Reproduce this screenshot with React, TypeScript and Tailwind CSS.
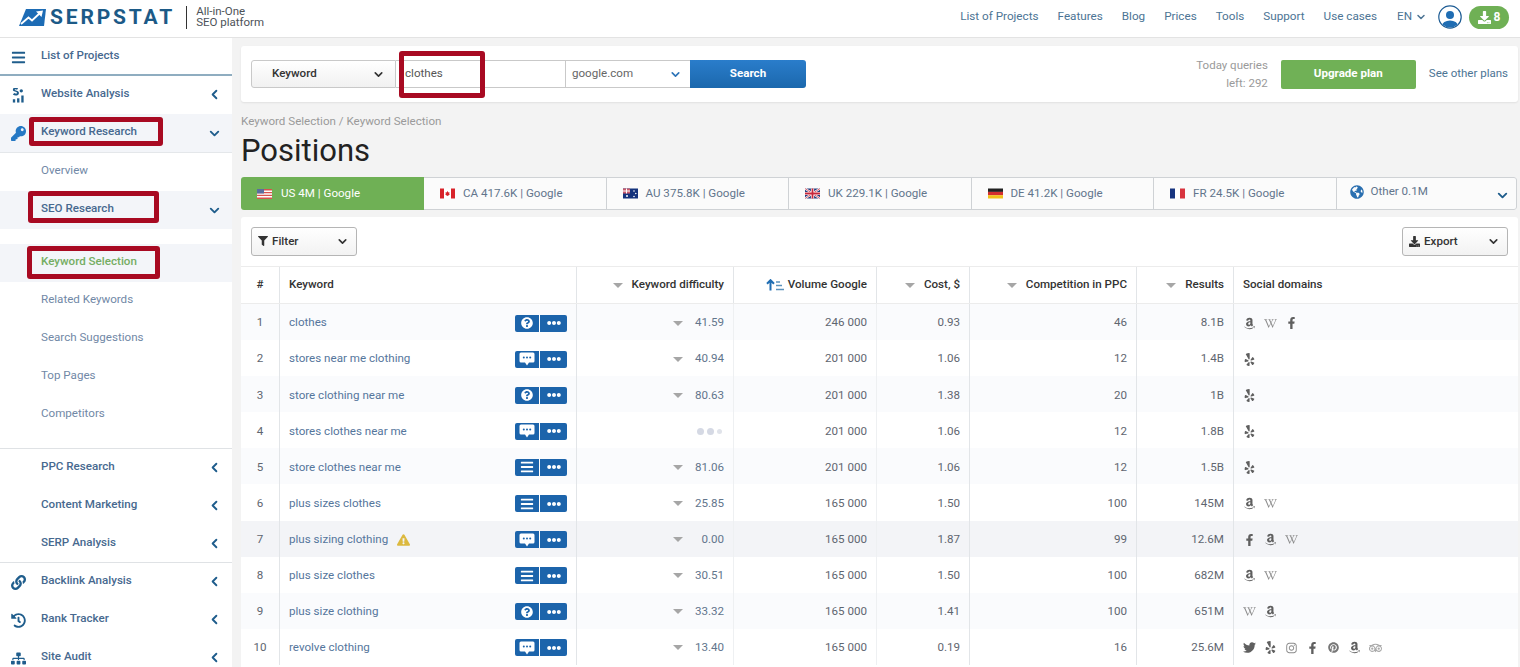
import React from "react";
import { ChevronDown, ChevronLeft } from "lucide-react";
import {
  FaAmazon,
  FaBars,
  FaDownload,
  FaEllipsisH,
  FaExclamationTriangle,
  FaFacebookF,
  FaFilter,
  FaGlobeAmericas,
  FaHistory,
  FaInstagram,
  FaKey,
  FaLink,
  FaPinterest,
  FaQuestionCircle,
  FaSitemap,
  FaTripadvisor,
  FaTwitter,
  FaWikipediaW,
  FaYelp,
} from "react-icons/fa";

const navLinks = ["List of Projects", "Features", "Blog", "Prices", "Tools", "Support", "Use cases"];

function Logo() {
  return (
    <div className="flex items-center">
      <svg viewBox="0 0 27 17" className="w-[27px] h-[17px] ml-[19px]">
        <path d="M7 0H27L25 17H0Z" fill="#1d6cb5" />
        <path d="M2 15L9.500 8.500L13 11.500L21 4" fill="none" stroke="#fff" strokeWidth="1.800" />
        <path d="M17 2.500L24 1.500L22.500 8Z" fill="#fff" />
      </svg>
      <span className="ml-[4px] text-[21px] leading-none font-bold tracking-[0.135em] text-[#1c5a87]">SERPSTAT</span>
      <span className="ml-[11px] w-px h-[23px] bg-[#333]" />
      <span className="ml-[9px] text-[11.5px] leading-[11px] text-[#4d5258]">
        All-in-One
        <br />
        SEO platform
      </span>
    </div>
  );
}

function Header() {
  return (
    <header className="h-[38px] shrink-0 bg-white border-b border-[#e3e3e3] flex items-center justify-between pb-[3px]">
      <Logo />
      <div className="flex items-center pr-[11px]">
        <nav className="flex gap-[19px] text-[11.7px] text-[#4c7494]">
          {navLinks.map((l) => (
            <span key={l}>{l}</span>
          ))}
        </nav>
        <span className="ml-[20px] text-[11.7px] text-[#4c7494]">EN</span>
        <ChevronDown className="ml-[3px] w-[12px] h-[12px] text-[#4c7494]" strokeWidth={3} />
        <svg viewBox="0 0 24 24" className="ml-[11px] w-[24px] h-[24px]">
          <defs>
            <clipPath id="avatar">
              <circle cx="12" cy="12" r="10.5" />
            </clipPath>
          </defs>
          <circle cx="12" cy="12" r="11.2" fill="#fff" stroke="#1d5c94" strokeWidth="1.2" />
          <g clipPath="url(#avatar)" fill="#1f6db3">
            <circle cx="12" cy="10" r="4" />
            <ellipse cx="12" cy="21" rx="8" ry="5.5" />
          </g>
        </svg>
        <div className="ml-[7px] w-[40px] h-[23px] rounded-full bg-[#6fb055] flex items-center justify-center gap-[3px] text-white text-[12px] font-bold">
          <FaDownload className="w-[13px] h-[13px]" />
          <span>8</span>
        </div>
      </div>
    </header>
  );
}

function RedBox({ className }: { className: string }) {
  return <span className={`absolute border-[5px] border-[#a80a22] rounded-[3px] pointer-events-none ${className}`} />;
}

function WebsiteIcon() {
  return (
    <svg viewBox="0 0 14 16" className="w-[14px] h-[15px]" fill="#1f5d8c">
      <path d="M7 0.5a3 3 0 0 0-5.5 1.5c0 2 4.500 1.500 4.500 3.200 0 .8-1.500 1-3 0L1.500 7c2.500 2 6.500 1 6.500-1.800 0-2.700-4.500-2.300-4.500-3.300 0-.8 1.500-.8 2.500 0Z" />
      <circle cx="10.500" cy="3" r="1.800" />
      <rect x="1.500" y="12" width="2.500" height="3.500" />
      <rect x="6" y="11" width="2.500" height="4.500" />
      <rect x="10.500" y="8" width="2.500" height="7.500" />
    </svg>
  );
}

function SideRow({
  label,
  icon,
  tone = "top",
  chevron,
  active,
  box,
}: {
  label: string;
  icon?: React.ReactNode;
  tone?: "top" | "sub" | "child" | "current";
  chevron?: "left" | "down";
  active?: boolean;
  box?: string;
}) {
  const text =
    tone === "current"
      ? "text-[#75ad63] font-medium"
      : tone === "child"
        ? "text-[#7188a6]"
        : "text-[#47698f] font-medium";
  return (
    <div className={`relative h-[38px] flex items-center text-[11.6px] ${active ? "bg-[#f3f5f9]" : ""}`}>
      <span className="w-[41px] pl-[11px] shrink-0 flex items-center">{icon}</span>
      <span className={`pb-[3px] ${text}`}>{label}</span>
      {chevron === "left" && (
        <ChevronLeft className="absolute left-[207px] top-[11px] w-[15px] h-[15px] text-[#1f5d8c]" strokeWidth={3} />
      )}
      {chevron === "down" && (
        <ChevronDown className="absolute left-[207px] top-[12px] w-[15px] h-[15px] text-[#1f5d8c]" strokeWidth={3} />
      )}
      {box && <RedBox className={box} />}
    </div>
  );
}

function Sidebar() {
  const iconClass = "w-[15px] h-[15px] text-[#1f5d8c]";
  return (
    <aside className="w-[232px] shrink-0 bg-white overflow-hidden">
      <div className="border-b-2 border-[#8fadc0] h-[38px]">
        <SideRow label="List of Projects" icon={<FaBars className={iconClass} />} />
      </div>
      <SideRow label="Website Analysis" icon={<WebsiteIcon />} chevron="left" />
      <div className="border-b border-[#e4e7ea]">
        <SideRow
          label="Keyword Research"
          icon={<FaKey className="w-[15px] h-[15px] text-[#2578c4]" />}
          chevron="down"
          active
          box="left-[29px] top-[3px] w-[134px] h-[29px]"
        />
      </div>
      <SideRow label="Overview" tone="child" />
      <SideRow
        label="SEO Research"
        tone="sub"
        chevron="down"
        active
        box="left-[28px] top-0 w-[131px] h-[32px]"
      />
      <div className="h-[15px]" />
      <SideRow
        label="Keyword Selection"
        tone="current"
        active
        box="left-[27px] top-[2px] w-[133px] h-[33px]"
      />
      <SideRow label="Related Keywords" tone="child" />
      <SideRow label="Search Suggestions" tone="child" />
      <SideRow label="Top Pages" tone="child" />
      <SideRow label="Competitors" tone="child" />
      <div className="h-[15px] border-b border-[#dfe2e5]" />
      <SideRow label="PPC Research" tone="sub" chevron="left" />
      <SideRow label="Content Marketing" tone="sub" chevron="left" />
      <SideRow label="SERP Analysis" tone="sub" chevron="left" />
      <div className="border-t border-[#dfe2e5] -mt-px">
        <SideRow label="Backlink Analysis" icon={<FaLink className={iconClass} />} chevron="left" />
        <SideRow label="Rank Tracker" icon={<FaHistory className={iconClass} />} chevron="left" />
        <SideRow label="Site Audit" icon={<FaSitemap className={iconClass} />} chevron="left" />
      </div>
    </aside>
  );
}

function SearchCard() {
  return (
    <div className="h-[56px] bg-white rounded-[3px] flex items-center pl-[10px] pr-[10px] shadow-[0_1px_2px_rgba(0,0,0,0.08)]">
      <div className="flex h-[28px] text-[11.6px]">
        <div className="w-[145px] pl-[20px] pr-[10px] flex items-center justify-between border border-[#c9c9c9] rounded-l-[3px] bg-gradient-to-b from-white to-[#f1f1f1] font-medium text-[#333]">
          Keyword
          <ChevronDown className="w-[13px] h-[13px]" strokeWidth={3} />
        </div>
        <div className="relative w-[170px] px-[9px] flex items-center border-y border-r border-[#c9c9c9] text-[#555]">
          clothes
          <RedBox className="left-[3px] top-[-10px] w-[86px] h-[47px]" />
        </div>
        <div className="w-[124px] pl-[6px] pr-[8px] flex items-center justify-between border-y border-[#c9c9c9] text-[#666]">
          google.com
          <ChevronDown className="w-[13px] h-[13px] text-[#2d74b8]" strokeWidth={3} />
        </div>
        <div className="w-[116px] flex items-center justify-center rounded-r-[3px] bg-gradient-to-b from-[#2a7dcb] to-[#1b68ad] text-white font-bold">
          Search
        </div>
      </div>
      <div className="ml-auto text-right text-[11.5px] leading-[18px] text-[#9a9a9a]">
        Today queries
        <br />
        left: 292
      </div>
      <div className="ml-[13px] w-[135px] h-[29px] rounded-[2px] bg-[#70b156] flex items-center justify-center text-white text-[11.6px] font-bold">
        Upgrade plan
      </div>
      <span className="ml-[13px] text-[11.5px] text-[#4c7494]">See other plans</span>
    </div>
  );
}

function FlagUS() {
  return (
    <svg viewBox="0 0 15 10" className="w-[15px] h-[10px]">
      <rect width="15" height="10" fill="#fff" />
      <path d="M0 0h15v1.400H0zM0 2.900h15v1.400H0zM0 5.700h15v1.400H0zM0 8.600h15V10H0z" fill="#d8524e" />
      <rect width="7" height="4.500" fill="#5a6f9f" />
    </svg>
  );
}
function FlagCA() {
  return (
    <svg viewBox="0 0 15 10" className="w-[15px] h-[11px]">
      <rect width="15" height="10" fill="#fff" />
      <rect width="4" height="10" fill="#d8232a" />
      <rect x="11" width="4" height="10" fill="#d8232a" />
      <path d="M7.500 2.500l1 1.500 1-.3-.3 2 .8.300-2.500 1.500-2.500-1.500.8-.3-.3-2 1 .3z" fill="#d8232a" />
    </svg>
  );
}
function FlagAU() {
  return (
    <svg viewBox="0 0 15 10" className="w-[15px] h-[11px]">
      <rect width="15" height="10" fill="#15337d" />
      <rect width="7" height="5" fill="#c9586a" />
      <path d="M0 2h7v1H0zM3 0h1v5H3z" fill="#fff" />
      <circle cx="11" cy="2.500" r=".8" fill="#fff" />
      <circle cx="12.800" cy="5" r=".8" fill="#fff" />
      <circle cx="11" cy="8" r=".8" fill="#fff" />
      <circle cx="4" cy="7.500" r="1" fill="#fff" />
    </svg>
  );
}
function FlagUK() {
  return (
    <svg viewBox="0 0 15 10" className="w-[15px] h-[11px]">
      <rect width="15" height="10" fill="#27407f" />
      <path d="M0 0l15 10M15 0L0 10" stroke="#fff" strokeWidth="2" />
      <path d="M0 0l15 10M15 0L0 10" stroke="#c8283c" strokeWidth=".7" />
      <path d="M7.500 0v10M0 5h15" stroke="#fff" strokeWidth="3.200" />
      <path d="M7.500 0v10M0 5h15" stroke="#c8283c" strokeWidth="1.800" />
    </svg>
  );
}
function FlagDE() {
  return (
    <svg viewBox="0 0 15 10" className="w-[15px] h-[11px]">
      <rect width="15" height="3.400" fill="#222" />
      <rect y="3.400" width="15" height="3.300" fill="#d32f2f" />
      <rect y="6.700" width="15" height="3.300" fill="#f2c21a" />
    </svg>
  );
}
function FlagFR() {
  return (
    <svg viewBox="0 0 15 10" className="w-[15px] h-[11px]">
      <rect width="5" height="10" fill="#17347f" />
      <rect x="5" width="5" height="10" fill="#fff" />
      <rect x="10" width="5" height="10" fill="#d8343f" />
    </svg>
  );
}

function RegionTabs() {
  const tabs = [
    { label: "CA 417.6K | Google", flag: <FlagCA /> },
    { label: "AU 375.8K | Google", flag: <FlagAU /> },
    { label: "UK 229.1K | Google", flag: <FlagUK /> },
    { label: "DE 41.2K | Google", flag: <FlagDE /> },
    { label: "FR 24.5K | Google", flag: <FlagFR /> },
  ];
  return (
    <div className="flex h-[33px] text-[11.6px] rounded-[3px] overflow-hidden bg-[#fbfbfb] mr-px">
      <div className="w-[183px] shrink-0 bg-[#6fb055] text-white flex items-center gap-[9px] pl-[16px]">
        <FlagUS />
        US 4M | Google
      </div>
      {tabs.map((t) => (
        <div key={t.label} className="w-[182.500px] shrink-0 border-y border-r border-[#cfd2d5] flex items-center gap-[8px] pl-[16px] text-[#62758c]">
          {t.flag}
          {t.label}
        </div>
      ))}
      <div className="flex-1 relative border-y border-r border-[#cfd2d5] rounded-r-[3px] flex items-center gap-[7px] pl-[13px] pb-[3px] text-[#62758c]">
        <FaGlobeAmericas className="w-[14px] h-[14px] text-[#2a6fb0]" />
        Other 0.1M
        <ChevronDown className="absolute right-[6px] top-[10px] w-[15px] h-[15px] text-[#1f5d8c]" strokeWidth={3} />
      </div>
    </div>
  );
}

function SortArrow() {
  return <span className="w-0 h-0 border-x-[5px] border-x-transparent border-t-[5px] border-t-[#a6a6a6]" />;
}

function VolumeSort() {
  return (
    <svg viewBox="0 0 18 12" className="w-[18px] h-[12px]">
      <path d="M4.500 11.500V2M1 4.800L4.500 1.200 8 4.800" fill="none" stroke="#1f6db3" strokeWidth="2" />
      <path d="M10 3h4M10 6.500h6M10 10.500h8" stroke="#5b92bd" strokeWidth="1.300" fill="none" />
    </svg>
  );
}

function BubbleIcon() {
  return (
    <svg viewBox="0 0 16 14" className="w-[16px] h-[14px]">
      <path d="M2 0.500H14A1.500 1.500 0 0 1 15.500 2V9A1.500 1.500 0 0 1 14 10.500H10L8 13.500L6 10.500H2A1.500 1.500 0 0 1 .5 9V2A1.500 1.500 0 0 1 2 .5Z" fill="#fff" />
      <circle cx="4.800" cy="5.500" r="1" fill="#1c64ab" />
      <circle cx="8" cy="5.500" r="1" fill="#1c64ab" />
      <circle cx="11.200" cy="5.500" r="1" fill="#1c64ab" />
    </svg>
  );
}

type Soc = "a" | "w" | "f" | "y" | "t" | "i" | "p" | "ta";

type Row = {
  kw: string;
  badge: "q" | "c" | "l";
  diff: string | null;
  vol: string;
  cost: string;
  comp: string;
  res: string;
  soc: Soc[];
  warn?: boolean;
};

const rows: Row[] = [
  { kw: "clothes", badge: "q", diff: "41.59", vol: "246 000", cost: "0.93", comp: "46", res: "8.1B", soc: ["a", "w", "f"] },
  { kw: "stores near me clothing", badge: "c", diff: "40.94", vol: "201 000", cost: "1.06", comp: "12", res: "1.4B", soc: ["y"] },
  { kw: "store clothing near me", badge: "q", diff: "80.63", vol: "201 000", cost: "1.38", comp: "20", res: "1B", soc: ["y"] },
  { kw: "stores clothes near me", badge: "c", diff: null, vol: "201 000", cost: "1.06", comp: "12", res: "1.8B", soc: ["y"] },
  { kw: "store clothes near me", badge: "l", diff: "81.06", vol: "201 000", cost: "1.06", comp: "12", res: "1.5B", soc: ["y"] },
  { kw: "plus sizes clothes", badge: "l", diff: "25.85", vol: "165 000", cost: "1.50", comp: "100", res: "145M", soc: ["a", "w"] },
  { kw: "plus sizing clothing", badge: "c", diff: "0.00", vol: "165 000", cost: "1.87", comp: "99", res: "12.6M", soc: ["f", "a", "w"], warn: true },
  { kw: "plus size clothes", badge: "l", diff: "30.51", vol: "165 000", cost: "1.50", comp: "100", res: "682M", soc: ["a", "w"] },
  { kw: "plus size clothing", badge: "q", diff: "33.32", vol: "165 000", cost: "1.41", comp: "100", res: "651M", soc: ["w", "a"] },
  { kw: "revolve clothing", badge: "c", diff: "13.40", vol: "165 000", cost: "0.19", comp: "16", res: "25.6M", soc: ["t", "y", "i", "f", "p", "a", "ta"] },
];

function SocialIcon({ s }: { s: Soc }) {
  const c = "w-[13px] h-[13px] text-[#5f5f5f]";
  if (s === "a") return <FaAmazon className={c} />;
  if (s === "w") return <FaWikipediaW className="w-[13px] h-[13px] text-[#8a8a8a]" />;
  if (s === "f") return <FaFacebookF className="w-[13px] h-[12px] text-[#5f5f5f]" />;
  if (s === "y") return <FaYelp className={c} />;
  if (s === "t") return <FaTwitter className={c} />;
  if (s === "i") return <FaInstagram className="w-[13px] h-[12px] text-[#8a8a8a]" />;
  if (s === "p") return <FaPinterest className="w-[13px] h-[11px] text-[#777]" />;
  return <FaTripadvisor className="w-[13px] h-[12px] text-[#aaa]" />;
}

function KeywordBadge({ kind }: { kind: Row["badge"] }) {
  return (
    <div className="flex h-[17px] rounded-[2px] overflow-hidden text-white">
      <span className="w-[25px] bg-[#1c64ab] flex items-center justify-center border-r border-white">
        {kind === "q" && <FaQuestionCircle className="w-[12px] h-[12px]" />}
        {kind === "c" && <BubbleIcon />}
        {kind === "l" && <FaBars className="w-[14px] h-[14px]" />}
      </span>
      <span className="w-[27px] bg-[#1c64ab] flex items-center justify-center">
        <FaEllipsisH className="w-[14px] h-[14px]" />
      </span>
    </div>
  );
}

const grid = "grid grid-cols-[39px_297px_157px_143px_93px_167px_97px_1fr]";

function KeywordTable() {
  return (
    <div className="text-[11.6px] pb-[20px]">
      <div className={`${grid} h-[38px] border-y border-[#ececec] text-[#333]`}>
        <div className="border-r border-[#e2e5e8] flex items-center justify-center font-medium">#</div>
        <div className="border-r border-[#e2e5e8] flex items-center pl-[9px] font-medium">Keyword</div>
        <div className="border-r border-[#e2e5e8] flex items-center justify-end gap-[9px] pr-[9px] font-medium">
          <SortArrow />
          Keyword difficulty
        </div>
        <div className="border-r border-[#e2e5e8] flex items-center justify-end gap-[4px] pr-[9px] font-medium">
          <VolumeSort />
          Volume Google
        </div>
        <div className="border-r border-[#e2e5e8] flex items-center justify-end gap-[9px] pr-[9px] font-medium">
          <SortArrow />
          Cost, $
        </div>
        <div className="border-r border-[#e2e5e8] flex items-center justify-end gap-[9px] pr-[9px] font-medium">
          <SortArrow />
          Competition in PPC
        </div>
        <div className="border-r border-[#e2e5e8] flex items-center justify-end gap-[9px] pr-[9px] font-medium">
          <SortArrow />
          Results
        </div>
        <div className="flex items-center pl-[9px] font-medium">Social domains</div>
      </div>
      {rows.map((r, i) => (
        <div
          key={r.kw}
          className={`${grid} h-[36.100px] ${r.warn ? "bg-[#f3f4f7]" : i % 2 === 0 ? "bg-[#fafbfd]" : "bg-white"} text-[#5f6670]`}
        >
          <div className="border-r border-[#e2e5e8] flex items-center justify-center pt-[2px]">{i + 1}</div>
          <div className="border-r border-[#e2e5e8] flex items-center justify-between pl-[9px] pr-[9px] pt-[2px]">
            <span className="flex items-center gap-[9px] text-[#55769c]">
              {r.kw}
              {r.warn && <FaExclamationTriangle className="w-[13px] h-[12px] text-[#dcb93f]" />}
            </span>
            <KeywordBadge kind={r.badge} />
          </div>
          <div className="border-r border-[#eef0f2] flex items-center justify-end pr-[9px] pt-[2px] text-[#62758c]">
            {r.diff === null ? (
              <span className="flex items-center gap-[3px] mr-[2px]">
                <span className="w-[7px] h-[7px] rounded-full bg-[#d5d9e4]" />
                <span className="w-[7px] h-[7px] rounded-full bg-[#d5d9e4]" />
                <span className="w-[5px] h-[5px] rounded-full bg-[#e0e3ea]" />
              </span>
            ) : (
              <span className="flex items-center gap-[12px]">
                <SortArrow />
                <span className="w-[29px] text-right">{r.diff}</span>
              </span>
            )}
          </div>
          <div className="border-r border-[#eef0f2] flex items-center justify-end pr-[9px] pt-[2px]">{r.vol}</div>
          <div className="border-r border-[#e2e5e8] flex items-center justify-end pr-[9px] pt-[2px]">{r.cost}</div>
          <div className="border-r border-[#e2e5e8] flex items-center justify-end pr-[9px] pt-[2px]">{r.comp}</div>
          <div className="border-r border-[#e2e5e8] flex items-center justify-end pr-[9px] pt-[2px]">{r.res}</div>
          <div className="flex items-center gap-[8px] pl-[9px] pt-[2px]">
            {r.soc.map((s, j) => (
              <SocialIcon key={j} s={s} />
            ))}
          </div>
        </div>
      ))}
    </div>
  );
}

export default function App() {
  return (
    <div className="h-[667px] w-[1520px] overflow-hidden flex flex-col bg-[#f3f3f3] font-['Roboto',sans-serif]">
      <Header />
      <div className="flex flex-1 min-h-0">
        <Sidebar />
        <main className="flex-1 pl-[9px] pr-[2px] pt-[8px] overflow-hidden">
          <SearchCard />
          <div className="mt-[12px] text-[11.6px] leading-[14px] text-[#9a9a9a]">Keyword Selection / Keyword Selection</div>
          <h1 className="mt-[5px] text-[31px] leading-[36px] text-[#222]">Positions</h1>
          <div className="mt-[8px]">
            <RegionTabs />
          </div>
          <section className="mt-[7px] bg-white rounded-[3px]">
            <div className="h-[49px] flex items-center justify-between px-[10px]">
              <div className="w-[106px] h-[29px] rounded-[3px] border border-[#b5b5b5] bg-gradient-to-b from-white to-[#f2f2f2] flex items-center justify-between pl-[6px] pr-[7px] text-[11.6px] text-[#333]">
                <span className="flex items-center gap-[4px] font-medium">
                  <FaFilter className="w-[10px] h-[10px]" />
                  Filter
                </span>
                <ChevronDown className="w-[13px] h-[13px]" strokeWidth={3} />
              </div>
              <div className="w-[106px] h-[29px] rounded-[3px] border border-[#b5b5b5] bg-gradient-to-b from-white to-[#f2f2f2] flex items-center justify-between pl-[6px] pr-[7px] text-[11.6px] text-[#333]">
                <span className="flex items-center gap-[4px] font-medium">
                  <FaDownload className="w-[11px] h-[11px]" />
                  Export
                </span>
                <ChevronDown className="w-[13px] h-[13px]" strokeWidth={3} />
              </div>
            </div>
            <KeywordTable />
          </section>
        </main>
      </div>
    </div>
  );
}
